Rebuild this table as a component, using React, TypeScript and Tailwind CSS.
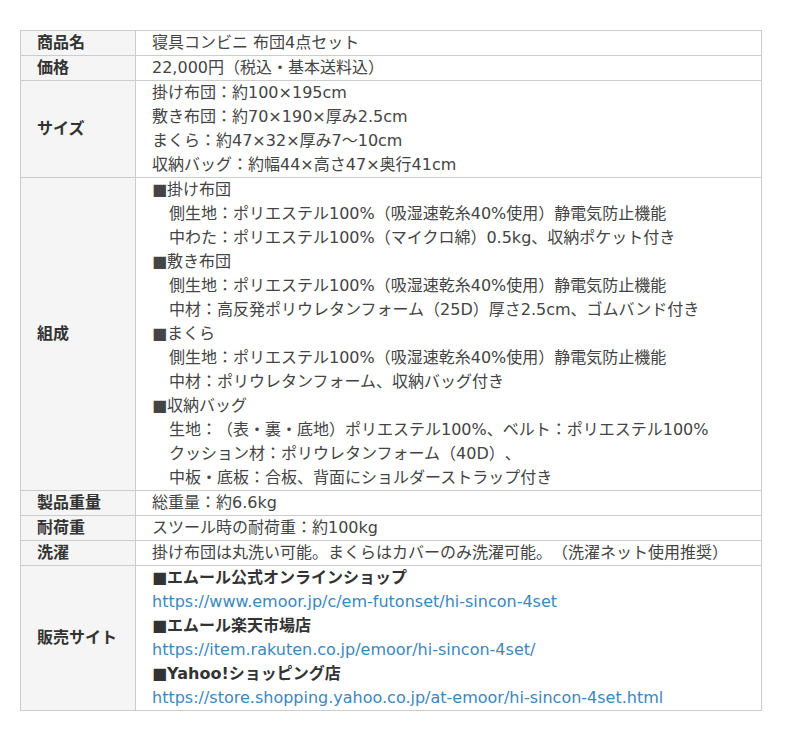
const composition = [
  { head: true, text: "■掛け布団" },
  { head: false, text: "側生地：ポリエステル100%（吸湿速乾糸40%使用）静電気防止機能" },
  { head: false, text: "中わた：ポリエステル100%（マイクロ綿）0.5kg、収納ポケット付き" },
  { head: true, text: "■敷き布団" },
  { head: false, text: "側生地：ポリエステル100%（吸湿速乾糸40%使用）静電気防止機能" },
  { head: false, text: "中材：高反発ポリウレタンフォーム（25D）厚さ2.5cm、ゴムバンド付き" },
  { head: true, text: "■まくら" },
  { head: false, text: "側生地：ポリエステル100%（吸湿速乾糸40%使用）静電気防止機能" },
  { head: false, text: "中材：ポリウレタンフォーム、収納バッグ付き" },
  { head: true, text: "■収納バッグ" },
  { head: false, text: "生地：（表・裏・底地）ポリエステル100%、ベルト：ポリエステル100%" },
  { head: false, text: "クッション材：ポリウレタンフォーム（40D）、" },
  { head: false, text: "中板・底板：合板、背面にショルダーストラップ付き" },
];

const shops = [
  { name: "■エムール公式オンラインショップ", url: "https://www.emoor.jp/c/em-futonset/hi-sincon-4set" },
  { name: "■エムール楽天市場店", url: "https://item.rakuten.co.jp/emoor/hi-sincon-4set/" },
  { name: "■Yahoo!ショッピング店", url: "https://store.shopping.yahoo.co.jp/at-emoor/hi-sincon-4set.html" },
];

function Row({ label, children }: { label: string; children: React.ReactNode }) {
  return (
    <tr>
      <th className="w-[115px] border border-[#cccccc] bg-[#f5f5f5] px-4 py-0 text-left align-middle font-bold text-[#333333]">
        {label}
      </th>
      <td className="border border-[#cccccc] px-4 py-0 align-top text-[#444444]">{children}</td>
    </tr>
  );
}

export default function App() {
  return (
    <div
      lang="ja"
      className="bg-white pt-[30px] pl-[20px] text-[16px] leading-[24px] [text-spacing-trim:space-all]"
      style={{ fontFamily: '"DejaVu Sans", "Noto Sans CJK JP", sans-serif' }}
    >
      <table className="w-[742px] border-collapse">
        <tbody>
          <Row label="商品名">寝具コンビニ 布団4点セット</Row>
          <Row label="価格">22,000円（税込・基本送料込）</Row>
          <Row label="サイズ">
            <div>掛け布団：約100×195cm</div>
            <div>敷き布団：約70×190×厚み2.5cm</div>
            <div>まくら：約47×32×厚み7～10cm</div>
            <div>収納バッグ：約幅44×高さ47×奥行41cm</div>
          </Row>
          <Row label="組成">
            {composition.map((line, i) => (
              <div key={i} className={line.head ? "" : "pl-[17px]"}>
                {line.text}
              </div>
            ))}
          </Row>
          <Row label="製品重量">総重量：約6.6kg</Row>
          <Row label="耐荷重">スツール時の耐荷重：約100kg</Row>
          <Row label="洗濯">掛け布団は丸洗い可能。まくらはカバーのみ洗濯可能。（洗濯ネット使用推奨）</Row>
          <Row label="販売サイト">
            {shops.map((s) => (
              <div key={s.url}>
                <div className="font-bold text-[#333333]">{s.name}</div>
                <a href={s.url} className="text-[#3b87c0]">
                  {s.url}
                </a>
              </div>
            ))}
          </Row>
        </tbody>
      </table>
    </div>
  );
}
